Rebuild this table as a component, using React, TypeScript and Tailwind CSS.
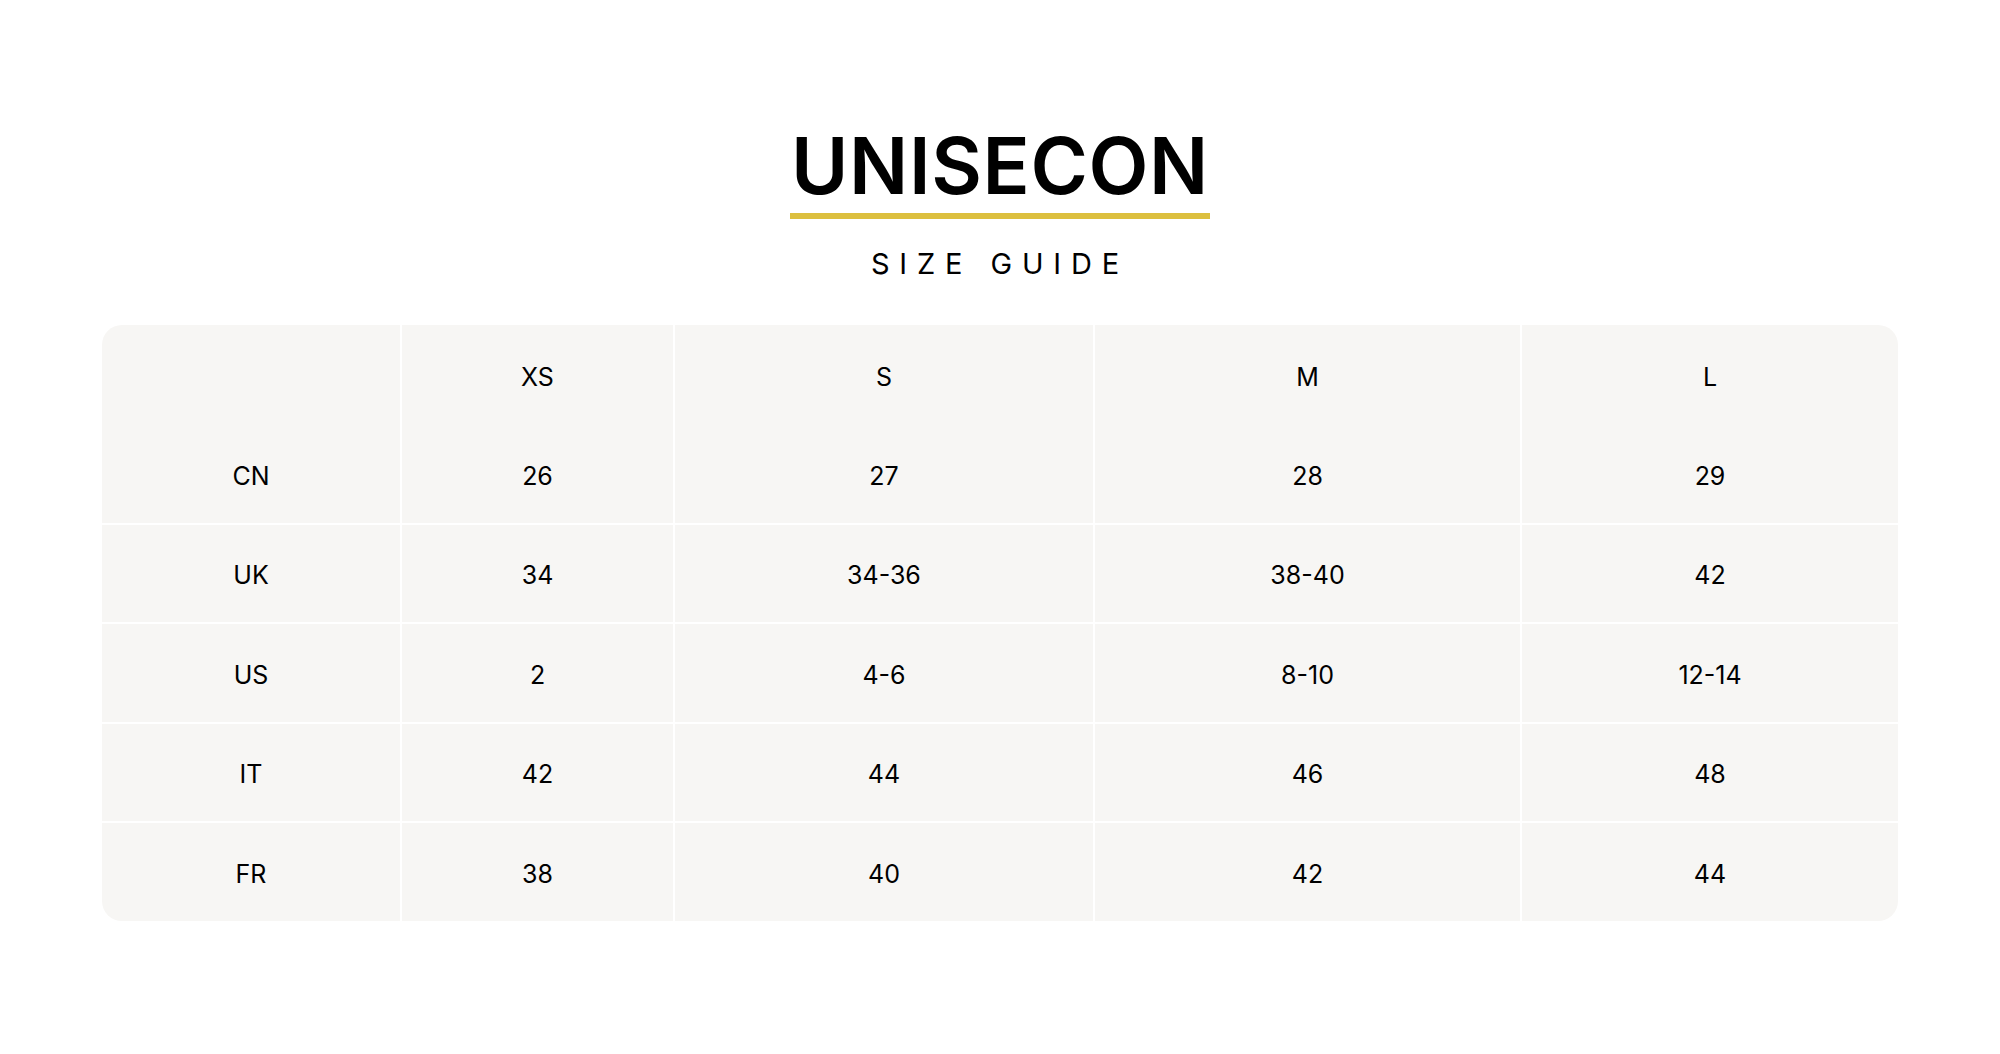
const sizes = ['XS', 'S', 'M', 'L']

const rows: { label: string; values: string[] }[] = [
  { label: 'CN', values: ['26', '27', '28', '29'] },
  { label: 'UK', values: ['34', '34-36', '38-40', '42'] },
  { label: 'US', values: ['2', '4-6', '8-10', '12-14'] },
  { label: 'IT', values: ['42', '44', '46', '48'] },
  { label: 'FR', values: ['38', '40', '42', '44'] },
]

const cols = 'grid grid-cols-[298px_273px_420px_427px_378px]'

const Cell = ({ children, first }: { children?: React.ReactNode; first?: boolean }) => (
  <div
    className={`flex items-center justify-center pt-[5px] ${first ? '' : 'border-l-2 border-white'}`}
  >
    {children}
  </div>
)

const App = () => {
  return (
    <div
      className="min-h-screen w-full bg-white text-black flex flex-col items-center"
      style={{ fontFamily: 'Inter, "Noto Sans", sans-serif' }}
    >
      {/* brand */}
      <div className="mt-[127px] flex flex-col items-center">
        <div className="inline-flex flex-col items-stretch">
          <h1 className="px-[1px] text-[78px] leading-none font-semibold tracking-[0.008em] text-black">
            UNISECON
          </h1>
          <div className="mt-[8px] h-[6px] bg-[#dcbf3e]" />
        </div>
        <p className="mt-[30px] text-[29px] leading-none tracking-[0.34em] text-black">
          SIZE GUIDE
        </p>
      </div>

      {/* table */}
      <div className="mt-[47px] w-[1796px] h-[596px] rounded-[20px] overflow-hidden bg-[#f7f6f4] text-[25px] flex flex-col">
        <div className={`${cols} h-[100px]`}>
          <Cell first />
          {sizes.map((s) => (
            <Cell key={s}>{s}</Cell>
          ))}
        </div>
        {rows.map((row, i) => (
          <div
            key={row.label}
            className={`${cols} flex-1 ${i === 0 ? '' : 'border-t-2 border-white'}`}
          >
            <Cell first>{row.label}</Cell>
            {row.values.map((v, j) => (
              <Cell key={j}>{v}</Cell>
            ))}
          </div>
        ))}
      </div>
    </div>
  )
}

export default App
